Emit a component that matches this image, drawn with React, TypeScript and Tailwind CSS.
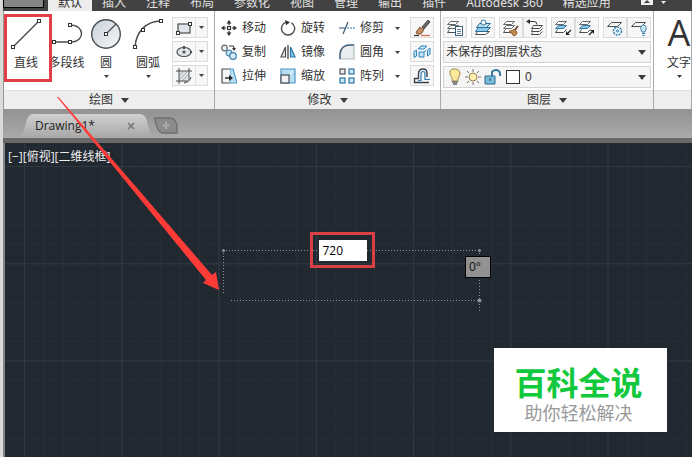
import type { ReactNode } from 'react';

const tabs = ['默认', '插入', '注释', '布局', '参数化', '视图', '管理', '输出', '插件', 'Autodesk 360', '精选应用'];

function Caret({ small = false }: { small?: boolean }) {
  return small ? (
    <svg width="5" height="3" viewBox="0 0 5 3" aria-hidden="true">
      <path d="M0 0h5L2.500 3z" fill="#3c3c3c" />
    </svg>
  ) : (
    <svg width="8" height="5" viewBox="0 0 8 5" aria-hidden="true">
      <path d="M0 0h8L4 5z" fill="#3c3c3c" />
    </svg>
  );
}

function Icon({ size, children }: { size: number; children: ReactNode }) {
  return (
    <svg width={size} height={size} viewBox={`0 0 ${size} ${size}`} fill="none" stroke="#4a4d50" strokeWidth="1.2" aria-hidden="true" className="shrink-0">
      {children}
    </svg>
  );
}

function Node({ x, y }: { x: number; y: number }) {
  return <rect x={x - 1.5} y={y - 1.5} width="3" height="3" fill="#fff" stroke="#333" strokeWidth="1" />;
}

const largeTools = [
  {
    label: '直线',
    menu: false,
    marked: true,
    icon: (
      <Icon size={32}>
        <path d="M3 30 29 4" strokeWidth="1.4" />
        <Node x={3} y={30} />
        <Node x={29} y={4} />
      </Icon>
    ),
  },
  {
    label: '多段线',
    menu: false,
    marked: false,
    icon: (
      <Icon size={32}>
        <path d="M3 25H21C34 24 34 8 19 8" strokeWidth="1.4" />
        <Node x={3} y={25} />
        <Node x={19} y={25} />
        <Node x={19} y={8} />
      </Icon>
    ),
  },
  {
    label: '圆',
    menu: true,
    marked: false,
    icon: (
      <Icon size={32}>
        <defs>
          <linearGradient id="disc" x1="0" y1="0" x2="1" y2="1">
            <stop offset="0" stopColor="#c9d0d7" />
            <stop offset="1" stopColor="#f6f8fa" />
          </linearGradient>
        </defs>
        <circle cx="16" cy="17" r="14.3" fill="url(#disc)" strokeWidth="1.400" />
        <path d="M16 17 26 7" />
        <Node x={16} y={17} />
      </Icon>
    ),
  },
  {
    label: '圆弧',
    menu: true,
    marked: false,
    icon: (
      <Icon size={32}>
        <path d="M3 30C4 15 14 4 29 4" strokeWidth="1.5" />
        <Node x={3} y={30} />
        <Node x={11} y={13} />
        <Node x={29} y={4} />
      </Icon>
    ),
  },
];

const shapeTools = [
  {
    label: '矩形',
    icon: (
      <Icon size={16}>
        <rect x="2" y="4" width="12" height="9" fill="#dfe5ea" />
        <Node x={2} y={13} />
        <Node x={14} y={4} />
      </Icon>
    ),
  },
  {
    label: '椭圆',
    icon: (
      <Icon size={16}>
        <ellipse cx="8" cy="8" rx="7" ry="4.500" fill="#dfe5ea" />
        <circle cx="8" cy="8" r="1" fill="#333" />
        <path d="M8 2v3M14 8h2" strokeWidth="2" />
      </Icon>
    ),
  },
  {
    label: '图案填充',
    icon: (
      <Icon size={16}>
        <path d="M3 3h10v8l-3 3H3z" fill="#dfe2e5" stroke="none" />
        <path d="M3 0v16M13 0v12M0 3h16M0 13h12M15 9q-1 5-7 6" strokeWidth="1" />
        <path d="m3 8 5-5M3 12l9-9M6 13l7-7" stroke="#8b8f93" strokeWidth=".6" />
      </Icon>
    ),
  },
];

const modifyTools = [
  {
    label: '移动',
    menu: false,
    icon: (
      <Icon size={16}>
        <path d="M8 3v2M8 11v2M3 8h2M11 8h2" stroke="#333" />
        <path d="m8 0 2.500 3.500h-5zM8 16l2.500-3.500h-5zM0 8l3.500-2.500v5zM16 8l-3.500-2.500v5z" fill="#333" stroke="none" />
        <rect x="6.500" y="6.500" width="3" height="3" fill="#fff" stroke="#333" />
      </Icon>
    ),
  },
  {
    label: '旋转',
    menu: false,
    icon: (
      <Icon size={16}>
        <path d="M11.500 2.800A6.600 6.600 0 1 1 6 2.200" strokeWidth="1.400" />
        <path d="m5 0 5 2.300-4 3z" fill="#333" stroke="none" />
      </Icon>
    ),
  },
  {
    label: '修剪',
    menu: true,
    icon: (
      <Icon size={16}>
        <path d="M0 8h6M4 14 9 2" stroke="#38566f" />
        <path d="M8 8h8" stroke="#287bb8" strokeDasharray="2 1" />
      </Icon>
    ),
  },
  {
    label: '复制',
    menu: false,
    icon: (
      <Icon size={16}>
        <circle cx="3.500" cy="4" r="2.800" fill="#f0f3f5" stroke="#5d6266" />
        <circle cx="8" cy="9" r="2.800" fill="#cde7f6" stroke="#4c8db8" />
        <circle cx="12" cy="12" r="3.300" fill="#d8edf8" stroke="#397caa" />
        <path d="M8 2h4q1 0 1 3" stroke="#333" />
        <path d="M11 4h4l-2 3z" fill="#333" stroke="none" />
      </Icon>
    ),
  },
  {
    label: '镜像',
    menu: false,
    icon: (
      <Icon size={16}>
        <path d="M5.500 3v10H1z" fill="#eee" />
        <path d="M10.500 3v10H15z" fill="#8ccbed" stroke="#2b75a6" />
        <path d="M8 1v14" stroke="#333" />
      </Icon>
    ),
  },
  {
    label: '圆角',
    menu: true,
    icon: (
      <Icon size={16}>
        <path d="M1 15V10Q2 1 11 1h4v14z" fill="#e9edef" stroke="#b5bcc1" />
        <path d="M1 15V10Q2 1 11 1h4" stroke="#44617a" strokeWidth="1.400" />
      </Icon>
    ),
  },
  {
    label: '拉伸',
    menu: false,
    icon: (
      <Icon size={16}>
        <path d="M9 1h3l4 14H9z" fill="#bfe1f4" stroke="#4f9dcb" />
        <path d="M9 1H1v14h8" fill="#f3f5f6" />
        <path d="M4 10h5" stroke="#222" strokeWidth="1.400" />
        <path d="m8 7 4 3-4 3z" fill="#222" stroke="none" />
      </Icon>
    ),
  },
  {
    label: '缩放',
    menu: false,
    icon: (
      <Icon size={16}>
        <path d="M1 1h14v14H1z" fill="#b8def2" stroke="#4a95c2" />
        <rect x="1" y="7" width="8" height="8" fill="#f0f1f2" />
        <path d="m10 6 3-3" stroke="#ddf1fa" />
      </Icon>
    ),
  },
  {
    label: '阵列',
    menu: true,
    icon: (
      <Icon size={16}>
        <rect x="1" y="1" width="5" height="5" fill="#eee" />
        <g fill="#cfe8f6" stroke="#2d76a5">
          <rect x="10" y="1" width="5" height="5" />
          <rect x="1" y="10" width="5" height="5" />
          <rect x="10" y="10" width="5" height="5" />
        </g>
      </Icon>
    ),
  },
];

const editTools = [
  {
    label: '删除',
    icon: (
      <Icon size={18}>
        <path d="m9 8 6-7 2 2-6 7z" fill="#6b6762" stroke="#4c4845" strokeWidth="1" />
        <path d="m7 8 4 3-3 4H4l-1-2z" fill="#c08a62" stroke="#8a5a3c" strokeWidth="1" />
        <path d="M1 16.500h5" stroke="#333" />
        <path d="M8 16.500h9" stroke="#cf6a4d" />
      </Icon>
    ),
  },
  {
    label: '分解',
    icon: (
      <Icon size={18}>
        <g fill="#c4e5f6" stroke="#2a86bd" strokeWidth="1">
          <path d="M1 8.500 3.500 7v6L1 14.500zM5 6l3-3h6l-3 3zM6 9h5v5H6zM14.500 7 17 5v6l-2.500 2zM11 9l2-2" />
        </g>
      </Icon>
    ),
  },
  {
    label: '偏移',
    icon: (
      <Icon size={18}>
        <path d="M16 15.500H1.500v-4h4V6.500q0-4.500 4.500-4.500 4 0 4 4v4" stroke="#353f49" strokeWidth="1.400" />
        <path d="M5 13.500h3V7q0-2.500 2-2.500T12 7v5.500h5" stroke="#2a7db2" />
      </Icon>
    ),
  },
];

function Layers({ blue = false, children }: { blue?: boolean; children?: ReactNode }) {
  return (
    <Icon size={18}>
      <g strokeWidth="1" strokeLinejoin="round">
        <path d="M3.500 10.500 1.500 13.500h8l3-3" fill="#fff" />
        <path d="m1.500 9.500 3-3h8l-3 3z" fill={blue ? '#8fcbe9' : '#fff'} stroke={blue ? '#34779f' : '#62676b'} />
        <path d="m1.500 5.500 3-3h8l-3 3z" fill="#fff" stroke="#62676b" />
      </g>
      {children}
    </Icon>
  );
}

const layerGroups = [
  [
    {
      label: '图层特性',
      icon: (
        <Layers>
          <rect x="9.500" y="7.500" width="7" height="9" fill="#fff" stroke="#3b617c" strokeWidth="1" />
          <path d="M11 10.500h4M11 12.500h4M11 14.500h4" stroke="#3b617c" strokeWidth=".8" />
        </Layers>
      ),
    },
  ],
  [
    {
      label: '置为当前',
      icon: (
        <Icon size={18}>
          <g strokeWidth="1" strokeLinejoin="round">
            <path d="m1.500 15.500 2-3h12l-4 3z" fill="#fff" />
            <path d="m1.500 12.500 3-4h12l-4 4z" fill="#8acbea" stroke="#286e98" />
            <path d="m2.500 8.500 3-4h11l-4 4z" fill="#bae0f2" stroke="#286e98" />
            <circle cx="9.500" cy="3.500" r="2.500" fill="#f3fafd" stroke="#35789f" />
          </g>
        </Icon>
      ),
    },
  ],
  [
    {
      label: '匹配图层',
      icon: (
        <Layers>
          <path d="m16 7-3 4" stroke="#785135" strokeWidth="2" />
          <path d="M7 12q4 0 5-2l3 3q0 3-3 4-2-1-2-3-1 1-3-2z" fill="#c08a50" stroke="#8b5f35" strokeWidth="1" />
        </Layers>
      ),
    },
    {
      label: '上一个',
      icon: (
        <Icon size={18}>
          <g strokeWidth="1">
            <path d="M2 2.500h6q3 0 3 3" stroke="#333" />
            <path d="M4 0v5L0 2.500z" fill="#333" stroke="none" />
            <path d="m5.500 9.500 2-3h9l-3 3zM6.500 10.500l-1 2h8l3-3M6.500 13.500l-1 2h8l3-3" />
          </g>
        </Icon>
      ),
    },
  ],
  [
    {
      label: '隔离',
      icon: (
        <Layers blue>
          <path d="m17 11-3 3" stroke="#222" />
          <path d="M12 12v4h4z" fill="#222" stroke="none" />
        </Layers>
      ),
    },
    {
      label: '取消隔离',
      icon: (
        <Layers blue>
          <path d="m11 16 3-3" stroke="#222" />
          <path d="M12 11h4v4z" fill="#222" stroke="none" />
        </Layers>
      ),
    },
  ],
  [
    {
      label: '冻结',
      icon: (
        <Icon size={18}>
          <path d="m1.500 7.500 4-4h10l-4 4z" fill="#f2f5f6" strokeWidth="1" />
          <circle cx="11.500" cy="12" r="4" fill="#e6f4fb" stroke="#3680b0" strokeWidth="1.500" strokeDasharray="2 1" />
          <circle cx="11.500" cy="12" r="1" stroke="#3680b0" strokeWidth="1" />
        </Icon>
      ),
    },
    {
      label: '关闭',
      icon: (
        <Icon size={18}>
          <path d="m1.500 7.500 4-4h10l-4 4z" fill="#f2f5f6" strokeWidth="1" />
          <path d="M12 13q-3-6 1.500-7 4.500 1 1.500 7z" fill="#d3ebf7" stroke="#3680b0" strokeWidth="1" />
          <path d="M12 14.500h3M12.500 16.500h2" stroke="#3680b0" strokeWidth="1" />
        </Icon>
      ),
    },
  ],
];

function Panel({ title, className, children }: { title: string; className: string; children: ReactNode }) {
  return (
    <section className={`flex h-[98px] flex-col border-r border-[#aaaaaa] bg-white ${className}`}>
      <div className="flex h-[79px] min-w-0 overflow-visible">{children}</div>
      <button type="button" className="flex h-[19px] w-full items-center justify-center gap-2 border-t border-[#e1e1e1] bg-[#eeeeee]">
        {title}
        {title && <Caret />}
      </button>
    </section>
  );
}

function DrawingGrid() {
  return (
    <svg className="absolute inset-0 h-full w-full" aria-hidden="true">
      <defs>
        <pattern id="minor-grid" x="19" y="23" width="19.45" height="19.45" patternUnits="userSpaceOnUse">
          <path d="M.5 0v19.450M0 .5h19.450" stroke="#252d37" fill="none" />
        </pattern>
        <pattern id="major-grid" x="19" y="23" width="97.25" height="97.25" patternUnits="userSpaceOnUse">
          <path d="M.5 0v97.250M0 .5h97.250" stroke="#2e3942" fill="none" />
        </pattern>
      </defs>
      <rect width="100%" height="100%" fill="url(#minor-grid)" />
      <rect width="100%" height="100%" fill="url(#major-grid)" />
      <g fill="none" stroke="#8a929a" strokeDasharray="1 2">
        <path d="M218 107.500H475M218.500 107v45M226 157.500H475M474.500 107v62" />
      </g>
      <g fill="#8a929a">
        <circle cx="218.500" cy="107.500" r="1.500" />
        <circle cx="474.500" cy="107.500" r="1.500" />
        <circle cx="474.500" cy="157.500" r="2" />
      </g>
    </svg>
  );
}

export default function App() {
  return (
    <div className="relative flex min-h-screen flex-col overflow-hidden border-l-[3px] border-[#d9dbd9] bg-[#999999] font-['Liberation_Sans','Noto_Sans_CJK_SC',sans-serif] text-xs text-[#333333]">
      <header className="flex h-[11px] items-end overflow-hidden bg-[#424242] text-[#e0e0e0]">
        <button type="button" aria-label="应用程序菜单" className="mr-1 mb-[3px] h-5 w-[41px] shrink-0 border border-t-0 border-black bg-[#858585]" />
        <nav className="flex shrink-0 font-['Noto_Sans','Noto_Sans_CJK_SC',sans-serif]">
          {tabs.map((tab, index) => (
            <button key={tab} type="button" className={`h-4 shrink-0 px-2.5 leading-4 ${index === 0 ? 'bg-[#ededed] text-[#333333]' : ''}`}>
              {tab}
            </button>
          ))}
        </nav>
        <button type="button" aria-label="功能区显示" className="ml-5 flex h-[11px] shrink-0 items-start gap-2">
          <svg width="12" height="5" viewBox="0 0 12 5" aria-hidden="true">
            <path d="M0 0h12v5H0z" fill="#eee" />
            <path d="m3 3 3-3 3 3z" fill="#444" />
          </svg>
          <svg width="5" height="4" viewBox="0 0 5 4" aria-hidden="true">
            <path d="M0 1h5L2.500 4z" fill="#eee" />
          </svg>
        </button>
      </header>

      <div className="flex overflow-hidden border-l border-[#999999] bg-white">
        <Panel title="绘图" className="w-[211px] shrink-0">
          {largeTools.map((tool) => (
            <button
              key={tool.label}
              type="button"
              className={`relative flex shrink-0 flex-col items-center pt-1.5 ${tool.marked ? 'z-10 w-11' : tool.label === '多段线' ? 'w-[37px]' : 'w-[42px]'}`}
            >
              {tool.icon}
              <span className="mt-1.5 leading-4 whitespace-nowrap">{tool.label}</span>
              {tool.menu && (
                <span className="mt-1 flex">
                  <Caret small />
                </span>
              )}
              {tool.marked && <span className="absolute top-[3px] left-0 h-[68px] w-12 border-[3px] border-[#e04045]" />}
            </button>
          ))}
          <div className="ml-[3px] flex flex-col gap-[3px] pt-1.5">
            {shapeTools.map((tool) => (
              <button key={tool.label} type="button" aria-label={tool.label} className="flex h-[21px] w-9 items-center border border-[#dcdcdc] bg-[#f7f7f7]">
                <span className="flex h-full w-[23px] items-center justify-center border-r border-[#e0e0e0]">{tool.icon}</span>
                <span className="flex flex-1 justify-center">
                  <Caret small />
                </span>
              </button>
            ))}
          </div>
        </Panel>

        <Panel title="修改" className="w-[226px] shrink-0">
          <div className="ml-1.5 grid w-[189px] grid-cols-[59px_59px_71px] content-start gap-y-2 pt-[9px]">
            {modifyTools.map((tool) => (
              <button key={tool.label} type="button" className="flex h-4 items-center gap-[5px] leading-4 whitespace-nowrap">
                {tool.icon}
                <span>{tool.label}</span>
                {tool.menu && (
                  <span className="ml-1.5 flex">
                    <Caret small />
                  </span>
                )}
              </button>
            ))}
          </div>
          <div className="flex flex-col gap-[3px] pt-1.5">
            {editTools.map((tool) => (
              <button key={tool.label} type="button" aria-label={tool.label} className="flex h-[21px] w-6 items-center justify-center border border-[#dcdcdc] bg-[#f7f7f7]">
                {tool.icon}
              </button>
            ))}
          </div>
        </Panel>

        <Panel title="图层" className="w-[213px] shrink-0">
          <div className="flex min-w-0 flex-1 flex-col gap-[3px] px-0.5 pt-1.5">
            <div className="flex h-[21px] justify-between">
              {layerGroups.map((group) => (
                <div key={group[0].label} className="flex">
                  {group.map((tool) => (
                    <button key={tool.label} type="button" aria-label={tool.label} className="flex w-6 items-center justify-center border border-[#dcdcdc] bg-[#f7f7f7]">
                      {tool.icon}
                    </button>
                  ))}
                </div>
              ))}
            </div>
            <div className="flex h-[22px] items-center border border-[#d4d4d4] bg-[#f5f5f5] pr-1">
              <select aria-label="图层状态" className="h-full min-w-0 flex-1 appearance-none bg-transparent pl-0.5 outline-none">
                <option>未保存的图层状态</option>
              </select>
              <Caret />
            </div>
            <div className="flex h-[22px] items-center gap-[3px] border border-[#d4d4d4] bg-[#f5f5f5] pr-1 pl-1">
              <svg width="14" height="18" viewBox="0 0 14 18" fill="none" aria-hidden="true">
                <path d="M4 12Q5 9 2 7V3q2-3 5-2 5 0 5 5 0 2-2 4v3H4z" fill="#fbe89b" stroke="#a08858" />
                <path d="M4 14h6M5 16h4" stroke="#666" strokeWidth="1.500" />
              </svg>
              <svg width="16" height="16" viewBox="0 0 16 16" fill="none" aria-hidden="true">
                <path d="M8 0v3M8 13v3M0 8h3M13 8h3M2 2l2 2M12 12l2 2M14 2l-2 2M4 12l-2 2" stroke="#7d7363" />
                <circle cx="8" cy="8" r="4" fill="#ffeeb0" stroke="#9a8458" />
              </svg>
              <svg width="17" height="16" viewBox="0 0 17 16" fill="none" aria-hidden="true">
                <path d="M8 8V3q1-2 4-2t4 3v3" stroke="#35799f" strokeWidth="2" />
                <path d="M1 7h10v8H1z" fill="#7bbbdc" stroke="#286b91" />
                <path d="M6 9v3" stroke="#234d66" />
              </svg>
              <span className="ml-0.5 h-3.5 w-3.5 border border-[#333333] bg-white" />
              <select aria-label="当前图层" className="h-full min-w-0 flex-1 appearance-none bg-transparent pl-0.5 outline-none">
                <option>0</option>
              </select>
              <Caret />
            </div>
          </div>
        </Panel>

        <Panel title="" className="min-w-[38px] flex-1">
          <button type="button" className="ml-[7px] flex w-9 shrink-0 flex-col items-center pt-1.5">
            <span className="flex h-8 items-center font-['Open_Sans',sans-serif] text-4xl leading-8 font-medium text-[#333333]">A</span>
            <span className="mt-1.5 leading-4">文字</span>
            <span className="mt-1 flex">
              <Caret small />
            </span>
          </button>
        </Panel>
      </div>

      <div className="flex h-[34px] items-start border-b-[5px] border-[#686868] bg-linear-to-b from-[#929292] to-[#aaaaaa] pt-[5px] pl-4">
        <div className="relative flex h-[23px] w-[134px] items-center">
          <svg className="absolute inset-0" width="134" height="23" viewBox="0 0 134 23" aria-hidden="true">
            <defs>
              <linearGradient id="sheet" x1="0" y1="0" x2="0" y2="1">
                <stop offset="0" stopColor="#d0d0d0" />
                <stop offset="1" stopColor="#ababab" />
              </linearGradient>
            </defs>
            <path d="M0 22Q5 20 7 9 9 0 14 0H121Q126 0 128 7 130 20 134 22z" fill="url(#sheet)" />
          </svg>
          <button type="button" className="relative ml-4 font-['Open_Sans',sans-serif] text-xs leading-5 text-[#222222]">Drawing1*</button>
          <button type="button" aria-label="关闭图形" className="relative mr-[18px] ml-auto">
            <svg width="8" height="8" viewBox="0 0 8 8" aria-hidden="true">
              <path d="m1 1 6 6M7 1 1 7" stroke="#777" strokeWidth="1.500" />
            </svg>
          </button>
        </div>
        <button type="button" aria-label="新图形" className="mt-[3px] ml-px">
          <svg width="24" height="17" viewBox="0 0 24 17" aria-hidden="true">
            <path d="M1 1h15q5 0 7 7v8H9Q3 16 1 1z" fill="#8b8b8b" stroke="#707070" strokeWidth="1.500" />
            <path d="M12 5v7M8.500 8.500h7" stroke="#aaa" strokeWidth="2" />
          </svg>
        </button>
      </div>

      <main className="relative min-h-[314px] flex-1 overflow-hidden border-l-2 border-[#858585] bg-[#212830]">
        <DrawingGrid />
        <div className="relative flex pt-1.5 pl-[3px] font-['Open_Sans','Noto_Sans_CJK_SC',sans-serif] leading-4 text-[#eeeeee]">
          <button type="button">[−]</button>
          <button type="button">[俯视]</button>
          <button type="button">[二维线框]</button>
        </div>
        <label className="absolute top-[89px] left-[305px] flex h-9 w-[65px] items-center justify-center border-[3px] border-[#d94045]">
          <span className="sr-only">长度</span>
          <input type="text" defaultValue="720" className="h-[21px] w-12 bg-white pl-1 font-['Open_Sans',sans-serif] text-xs text-black outline-none" />
        </label>
        <output className="absolute top-[113px] left-[460px] h-[22px] w-[26px] border border-black bg-[#929292] pl-[3px] font-['Open_Sans',sans-serif] leading-5 text-[#111111]">0°</output>
        <aside className="absolute top-[205px] left-[489px] flex h-[84px] w-[173px] flex-col items-center bg-white pt-2.5 pr-1 font-['Noto_Sans_CJK_SC',sans-serif]">
          <strong className="text-[32px] leading-[46px] font-bold text-[#12c83c]">百科全说</strong>
          <span className="text-lg leading-4 text-[#999999]">助你轻松解决</span>
        </aside>
      </main>

      <svg className="pointer-events-none absolute top-[97px] left-[54px] z-20" width="164" height="195" viewBox="0 0 164 195" aria-hidden="true">
        <path d="M0 0H1.500L155 178 159 175 162 193 146 186 149 183z" fill="#ff3b38" />
      </svg>
    </div>
  );
}
